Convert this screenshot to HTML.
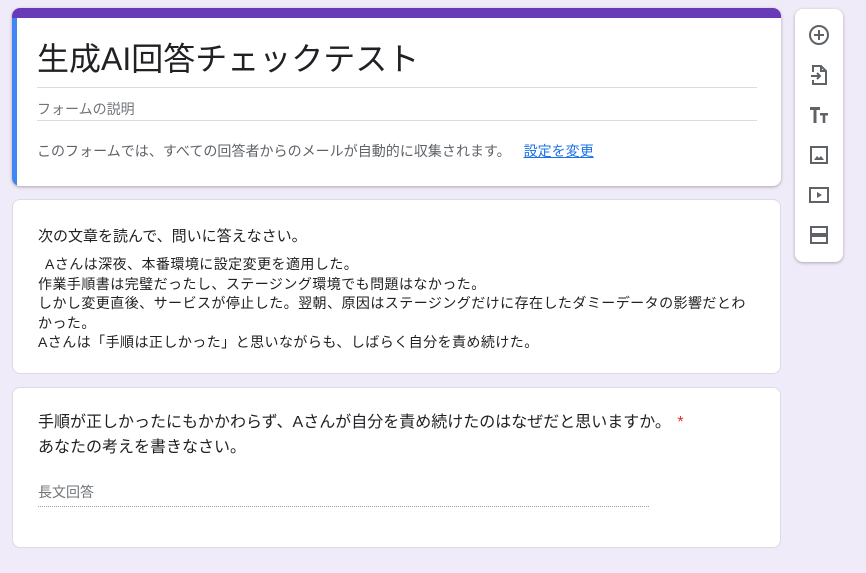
<!DOCTYPE html>
<html><head><meta charset="utf-8"><style>
body{margin:0;width:866px;height:573px;background:#f0ebf8;font-family:"Liberation Sans","Noto Sans CJK JP",sans-serif;position:relative;overflow:hidden;color:#202124}
.card{position:absolute;left:12px;width:769px;background:#fff;border:1px solid #dadce0;border-radius:8px;box-sizing:border-box}
.line{position:absolute;left:25px;width:720px;height:1px;background:#dadce0}
svg{position:absolute;left:12px}
</style></head><body>
<div class="card" style="top:8px;height:178px;border:none;box-shadow:0 1px 3px rgba(0,0,0,.3);overflow:hidden">
 <div style="position:absolute;left:0;top:0;right:0;height:10px;background:#673ab7"></div>
 <div style="position:absolute;left:0;top:10px;bottom:0;width:5px;background:#4285f4"></div>
 <div style="position:absolute;left:25px;top:30px;font-size:32px;line-height:42px">生成AI回答チェックテスト</div>
 <div class="line" style="top:79px"></div>
 <div style="position:absolute;left:25px;top:91px;font-size:14px;color:#70757a">フォームの説明</div>
 <div class="line" style="top:112px"></div>
 <div style="position:absolute;left:25px;top:133px;font-size:14px;color:#5f6368;letter-spacing:0.03px">このフォームでは、すべての回答者からのメールが自動的に収集されます。 <span style="color:#1a73e8;text-decoration:underline;margin-left:9px">設定を変更</span></div>
</div>
<div class="card" style="top:199px;height:175px">
 <div style="position:absolute;left:25px;top:25px;font-size:15px">次の文章を読んで、問いに答えなさい。</div>
 <div style="position:absolute;left:25px;top:55px;font-size:14px;line-height:19.5px;white-space:nowrap;letter-spacing:0.45px"><span style="margin-left:7px"></span>Aさんは深夜、本番環境に設定変更を適用した。<br>作業手順書は完璧だったし、ステージング環境でも問題はなかった。<br>しかし変更直後、サービスが停止した。翌朝、原因はステージングだけに存在したダミーデータの影響だとわ<br>かった。<br>Aさんは「手順は正しかった」と思いながらも、しばらく自分を責め続けた。</div>
</div>
<div class="card" style="top:387px;height:161px">
 <div style="position:absolute;left:25px;top:22px;font-size:16px;line-height:25px">手順が正しかったにもかかわらず、Aさんが自分を責め続けたのはなぜだと思いますか。 <span style="color:#d93025;margin-left:2px">*</span><br>あなたの考えを書きなさい。</div>
 <div style="position:absolute;left:25px;top:94px;font-size:14px;color:#70757a">長文回答</div>
 <div style="position:absolute;left:25px;top:118px;width:611px;border-top:1px dotted #9aa0a6"></div>
</div>
<div style="position:absolute;left:795px;top:9px;width:48px;height:253px;background:#fff;border-radius:8px;box-shadow:0 1px 3px rgba(0,0,0,.3)">
 <svg style="top:14px" width="24" height="24" viewBox="0 0 24 24" fill="none" stroke="#5f6368" stroke-width="2"><circle cx="12" cy="12" r="9"/><path d="M12 7v10M7 12h10"/></svg>
 <svg style="top:54px" width="24" height="24" viewBox="0 0 24 24" fill="none" stroke="#5f6368" stroke-width="2"><path d="M6 9V3h8l5 5v13H6v-4M14 3v5h5M4 13h9M10 10l3 3-3 3"/></svg>
 <svg style="top:94px" width="24" height="24" viewBox="0 0 24 24" fill="#5f6368"><path d="M3 4h10v3H9.5v13h-3V7H3zM13 10h8v2.5h-2.7V20h-2.6v-7.5H13z"/></svg>
 <svg style="top:134px" width="24" height="24" viewBox="0 0 24 24" fill="none" stroke="#5f6368" stroke-width="2"><rect x="4" y="4" width="16" height="16"/><path d="M7 17l3-4 2 2 2-2 3 4z" fill="#5f6368" stroke="none"/></svg>
 <svg style="top:174px" width="24" height="24" viewBox="0 0 24 24" fill="none" stroke="#5f6368" stroke-width="2"><rect x="3" y="5" width="18" height="14"/><path d="M10 9v6l5-3z" fill="#5f6368" stroke="none"/></svg>
 <svg style="top:214px" width="24" height="24" viewBox="0 0 24 24" fill="none" stroke="#5f6368" stroke-width="2"><rect x="4" y="4" width="16" height="7"/><rect x="4" y="13" width="16" height="7"/></svg>
</div>
</body></html>
